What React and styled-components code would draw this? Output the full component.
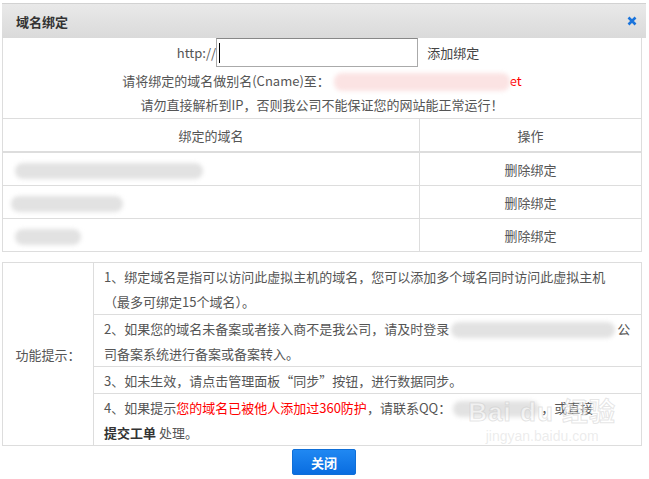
import React from 'react';
import styled, { createGlobalStyle } from 'styled-components';

const GlobalStyle = createGlobalStyle`
  body {
    margin: 0;
    background: #fff;
    font-family: "Noto Sans CJK SC", "Noto Sans", sans-serif;
    font-size: 13px;
    color: #555;
  }
`;

const Dialog = styled.div`
  position: relative;
  width: 644px;
  margin: 3px 0 0 2px;
`;

const Header = styled.div`
  height: 34px;
  display: flex;
  align-items: center;
  justify-content: space-between;
  padding: 0 9px 0 14px;
  background: linear-gradient(#e9e9e9, #dadada);
  border-top: 1px solid #d2d2d2;
`;

const Title = styled.h2`
  margin: 0;
  font-size: 13px;
  font-weight: bold;
  color: #333;
`;

const CloseIcon = styled.svg`
  width: 10px;
  height: 10px;
  display: block;
`;

const Body = styled.div`
  width: 640px;
`;

const BindPanel = styled.div`
  border: 1px solid #ddd;
  border-top: none;
`;

const FormRow = styled.div`
  display: flex;
  align-items: center;
  justify-content: center;
  height: 29px;
  padding-left: 12px;
`;

const Prefix = styled.span`
  color: #555;
`;

const DomainInput = styled.input`
  box-sizing: border-box;
  width: 202px;
  height: 29px;
  margin: 0;
  border: 1px solid #aaa;
  border-top-color: #888;
  outline: none;
  background: linear-gradient(#000, #000) no-repeat 2px 4px / 1px 20px, #fff;
`;

const AddLink = styled.span`
  margin-left: 9px;
  color: #444;
`;

const Notices = styled.div`
  padding: 2px 0 1px;
`;

const Notice = styled.p`
  margin: 0;
  text-align: center;
  line-height: 24px;
`;

const Redact = styled.span`
  display: inline-block;
  width: ${(p) => p.w}px;
  height: ${(p) => p.h || 16}px;
  margin: ${(p) => p.m || '0'};
  vertical-align: middle;
  background: ${(p) => p.c || '#e2e2e2'};
  border-radius: 8px;
  filter: blur(2px);
`;

const Red = styled.span`
  color: #f00;
`;

const DomainTable = styled.table`
  width: 100%;
  border-collapse: collapse;
`;

const HeadCell = styled.th`
  height: 32px;
  padding: 0;
  font-weight: normal;
  color: #555;
  border-top: 1px solid #ddd;
  border-bottom: 2px solid #ddd;
  & + & {
    border-left: 1px solid #ddd;
  }
`;

const Cell = styled.td`
  height: 32px;
  padding: 0 10px;
  text-align: ${(p) => p.align || 'left'};
  border-top: 1px solid #ddd;
  & + & {
    border-left: 1px solid #ddd;
  }
`;

const TipTable = styled.table`
  width: 100%;
  margin-top: 10px;
  border-collapse: collapse;
  border: 1px solid #ddd;
`;

const TipLabel = styled.td`
  width: 90px;
  padding: 0;
  text-align: center;
  vertical-align: middle;
  border: 1px solid #ddd;
`;

const TipCell = styled.td`
  padding: 1px 7px 0 10px;
  line-height: 25px;
  border: 1px solid #ddd;
`;

const Strong = styled.b`
  color: #333;
`;

const Footer = styled.div`
  display: flex;
  justify-content: center;
  padding-top: 3px;
`;

const CloseButton = styled.button`
  width: 64px;
  height: 26px;
  border: 1px solid #0f6fd8;
  border-radius: 2px;
  background: linear-gradient(#2088f2, #0a6de0);
  color: #fff;
  font-family: inherit;
  font-size: 13px;
  font-weight: bold;
  cursor: pointer;
`;

const Watermark = styled.div`
  position: absolute;
  right: 30px;
  bottom: 30px;
  display: flex;
  flex-direction: column;
  align-items: center;
  pointer-events: none;
  color: rgba(255, 255, 255, 0.5);
  -webkit-text-stroke: 1px rgba(190, 190, 190, 0.4);
`;

const MarkBrand = styled.div`
  font-family: "Liberation Sans", "Noto Sans CJK SC", sans-serif;
  font-size: 26px;
  font-weight: bold;
  line-height: 30px;
  letter-spacing: 1px;
`;

const MarkSite = styled.div`
  font-family: "Liberation Sans", sans-serif;
  font-size: 14px;
  line-height: 18px;
  color: rgba(200, 200, 200, 0.35);
  -webkit-text-stroke: 0;
`;

const domains = [
  { w: 188, m: '0 0 0 2px' },
  { w: 112, m: '0 0 0 -2px' },
  { w: 66, m: '0 0 0 2px' },
];

export default function App() {
  return (
    <>
      <GlobalStyle />
      <Dialog>
        <Header>
          <Title>域名绑定</Title>
          <CloseIcon viewBox="0 0 10 10">
            <path d="M1.5 1.5 L8.5 8.5 M8.5 1.5 L1.5 8.5" stroke="#1a74dc" strokeWidth="2.6" />
          </CloseIcon>
        </Header>
        <Body>
          <BindPanel>
            <FormRow>
              <Prefix>http://</Prefix>
              <DomainInput type="text" />
              <AddLink>添加绑定</AddLink>
            </FormRow>
            <Notices>
              <Notice>
                请将绑定的域名做别名(Cname)至：<Redact w={176} h={18} c="#fbe3e3" m="0 0 0 4px" />
                <Red>et</Red>
              </Notice>
              <Notice>请勿直接解析到IP，否则我公司不能保证您的网站能正常运行！</Notice>
            </Notices>
            <DomainTable>
              <thead>
                <tr>
                  <HeadCell>绑定的域名</HeadCell>
                  <HeadCell style={{ width: 221 }}>操作</HeadCell>
                </tr>
              </thead>
              <tbody>
                {domains.map((d, i) => (
                  <tr key={i}>
                    <Cell>
                      <Redact w={d.w} m={d.m} />
                    </Cell>
                    <Cell align="center">删除绑定</Cell>
                  </tr>
                ))}
              </tbody>
            </DomainTable>
          </BindPanel>

          <TipTable>
            <tbody>
              <tr>
                <TipLabel rowSpan={4}>功能提示：</TipLabel>
                <TipCell>
                  1、绑定域名是指可以访问此虚拟主机的域名，您可以添加多个域名同时访问此虚拟主机
                  <br />（最多可绑定15个域名）。
                </TipCell>
              </tr>
              <tr>
                <TipCell>
                  2、如果您的域名未备案或者接入商不是我公司，请及时登录
                  <Redact w={164} m="0 2px" />公
                  <br />司备案系统进行备案或备案转入。
                </TipCell>
              </tr>
              <tr>
                <TipCell>3、如未生效，请点击管理面板“同步”按钮，进行数据同步。</TipCell>
              </tr>
              <tr>
                <TipCell>
                  4、如果提示<Red>您的域名已被他人添加过360防护</Red>，请联系QQ：
                  <Redact w={86} m="0 2px" />，或直接
                  <br />
                  <Strong>提交工单</Strong> 处理。
                </TipCell>
              </tr>
            </tbody>
          </TipTable>
        </Body>
        <Footer>
          <CloseButton>关闭</CloseButton>
        </Footer>
        <Watermark>
          <MarkBrand>Bai du 经验</MarkBrand>
          <MarkSite>jingyan.baidu.com</MarkSite>
        </Watermark>
      </Dialog>
    </>
  );
}
